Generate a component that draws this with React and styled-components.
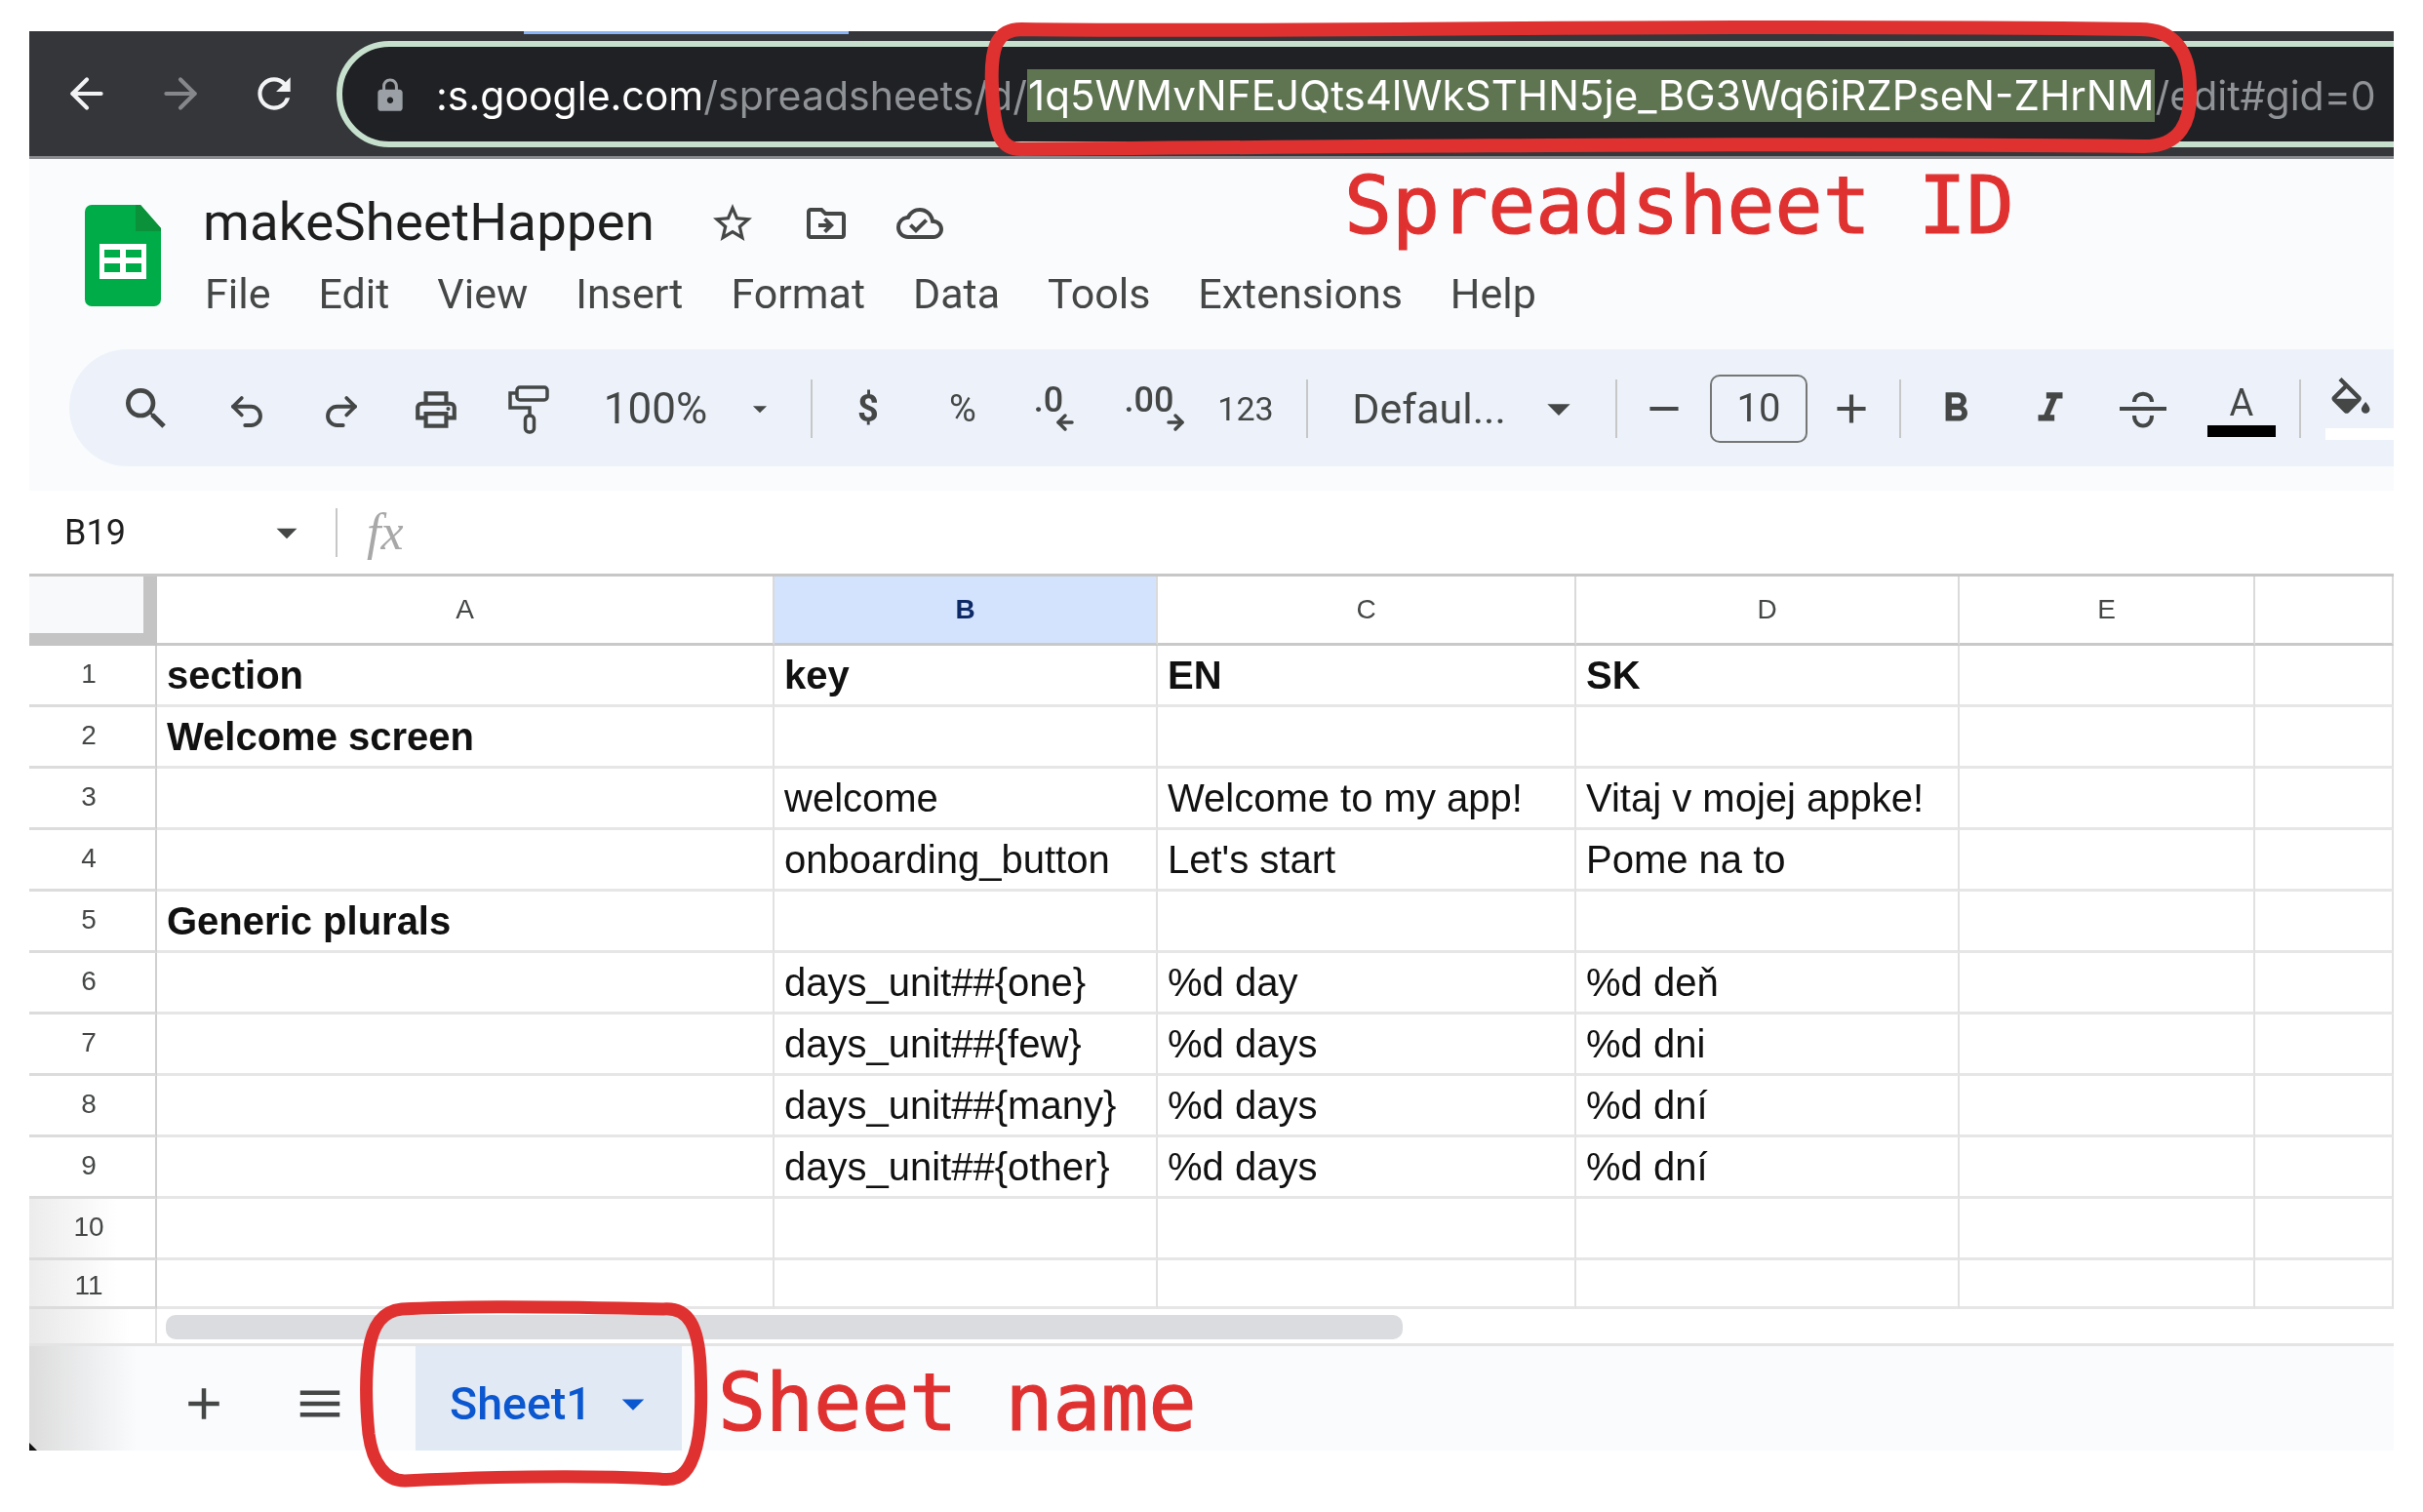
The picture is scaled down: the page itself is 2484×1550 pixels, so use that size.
import React from 'react';
import styled, { createGlobalStyle } from 'styled-components';
import { FiArrowLeft, FiArrowRight } from 'react-icons/fi';
import { Undo2, Redo2, ArrowLeft, ArrowRight } from 'lucide-react';
import {
  MdRefresh, MdLock, MdSearch, MdOutlineLocalPrintshop,
  MdArrowDropDown, MdOutlineStarBorder, MdOutlineDriveFileMove, MdOutlineCloudDone, MdAdd, MdRemove,
  MdFormatBold, MdFormatItalic, MdMenu,
} from 'react-icons/md';

const GlobalStyle = createGlobalStyle`
  html, body { margin: 0; padding: 0; background: #fff; }
  * { box-sizing: border-box; }
`;

const Page = styled.div`
  position: relative;
  width: 2484px;
  height: 1550px;
  padding: 32px 30px 0;
  background: #fff;
  overflow: hidden;
`;

const Screen = styled.div`
  height: 1455px;
  overflow: hidden;
  display: flex;
  flex-direction: column;
  filter: blur(0.6px);
  font-family: Roboto, "Liberation Sans", sans-serif;
`;

const BrowserBar = styled.div`
  position: relative;
  height: 131px;
  flex: none;
  display: flex;
  align-items: center;
  padding-left: 34px;
  background: #35363a;
  border-bottom: 3px solid #8a8c90;
  color: #fff;
`;

const LoadLine = styled.div`
  position: absolute;
  left: 507px;
  top: 0;
  width: 333px;
  height: 3px;
  background: #8ab4f8;
`;

const NavIcon = styled.span`
  width: 96px;
  flex: none;
  display: flex;
  align-items: center;
  color: ${(p) => (p.$dim ? '#85878a' : '#f1f3f4')};
  font-size: 50px;
`;

const AddressPill = styled.div`
  flex: 1;
  height: 109px;
  margin-left: -7px;
  margin-right: -80px;
  display: flex;
  align-items: center;
  padding: 3px 0 0 30px;
  border: 6px solid #c6e0cd;
  border-radius: 54px 0 0 54px;
  background: #202124;
  font-family: Inter, Roboto, sans-serif;
  font-size: 41px;
  white-space: nowrap;
`;

const LockIcon = styled.span`
  display: flex;
  width: 66px;
  flex: none;
  color: #9aa0a6;
  font-size: 38px;
`;

const UrlPart = styled.span`
  color: ${(p) => (p.$dim ? '#8f9296' : '#fff')};
`;

const UrlSelected = styled.span`
  display: inline-block;
  height: 54px;
  line-height: 54px;
  padding: 0 1px;
  background: #5f7552;
  color: #fff;
  font-size: 42.1px;
`;

const DocHeader = styled.div`
  flex: none;
  height: 340px;
  background: #f9fbfd;
  display: flex;
  flex-direction: column;
`;

const TitleArea = styled.div`
  height: 195px;
  display: flex;
  padding: 47px 0 0 57px;
`;

const LogoWrap = styled.div`
  width: 121px;
  flex: none;
`;

const TitleColumn = styled.div`
  display: flex;
  flex-direction: column;
  margin-top: -14px;
`;

const TitleRow = styled.div`
  display: flex;
  align-items: center;
  height: 62px;
`;

const DocTitle = styled.div`
  width: 519px;
  font-size: 54.5px;
  color: #1f1f1f;
  letter-spacing: 0.2px;
`;

const TitleIcon = styled.span`
  width: 96px;
  flex: none;
  display: flex;
  margin-top: 4px;
  color: #444746;
  font-size: 48px;
`;

const MenuBar = styled.div`
  display: flex;
  gap: 49px;
  margin-top: 18px;
  padding-left: 2px;
  font-size: 43px;
  color: #444746;
`;

const Toolbar = styled.div`
  height: 120px;
  margin-left: 41px;
  padding: 1px 0 0 31px;
  display: flex;
  align-items: center;
  overflow: hidden;
  background: #edf2fa;
  border-radius: 60px 0 0 60px;
  color: #444746;
`;

const Tool = styled.div`
  position: relative;
  width: ${(p) => p.$w}px;
  flex: none;
  height: 70px;
  display: flex;
  align-items: center;
  justify-content: center;
  padding-top: ${(p) => p.$drop || 0}px;
  font-size: ${(p) => p.$size || 50}px;
  font-weight: ${(p) => (p.$bold ? 700 : 400)};
`;

const ToolDivider = styled.div`
  width: ${(p) => p.$w}px;
  flex: none;
  display: flex;
  justify-content: center;

  &::before {
    content: '';
    width: 2px;
    height: 60px;
    background: #c7c7c7;
  }
`;

const SizeBox = styled.div`
  width: 100px;
  height: 70px;
  display: flex;
  align-items: center;
  justify-content: center;
  border: 2px solid #747775;
  border-radius: 10px;
  font-size: 40px;
`;

const DecimalMark = styled.span`
  display: flex;
  flex-direction: column;
  align-items: flex-end;
  font-size: 36px;
  line-height: 34px;
  font-weight: 500;
  transform: translateX(${(p) => p.$shift || 0}px);

  svg {
    margin: -6px -14px 0 0;
  }
`;

const ColorMark = styled.span`
  display: flex;
  flex-direction: column;
  align-items: ${(p) => (p.$start ? 'flex-start' : 'center')};
  font-size: 38px;
  line-height: 46px;
`;

const ColorSwatch = styled.span`
  width: 70px;
  height: 12px;
  background: ${(p) => p.$color};
`;

const FormulaBar = styled.div`
  flex: none;
  height: 85px;
  padding-left: 36px;
  display: flex;
  align-items: center;
  background: #fff;
`;

const NameBox = styled.div`
  width: 203px;
  font-size: 36px;
  color: #1f1f1f;
`;

const NameCaret = styled.span`
  width: 75px;
  display: flex;
  color: #444746;
  font-size: 50px;
`;

const FormulaDivider = styled.div`
  width: 2px;
  height: 50px;
  margin-right: 30px;
  background: #c7c7c7;
`;

const FxMark = styled.div`
  font-family: "Liberation Serif", serif;
  font-style: italic;
  font-size: 52px;
  color: #a8a8a8;
`;

const Sheet = styled.div`
  flex: none;
  display: grid;
  grid-template-columns: 131px 633px 393px 429px 393px 303px 142px;
  grid-template-rows: 71px repeat(10, 63px) 50px;
  border-top: 3px solid #c7c7c7;
  background: #fff;
  font-family: "Liberation Sans", Arial, sans-serif;
`;

const Corner = styled.div`
  background: #f8f9fa;
  border-right: 14px solid #c4c4c4;
  border-bottom: 13px solid #c4c4c4;
`;

const ColHead = styled.div`
  display: flex;
  align-items: center;
  justify-content: center;
  font-size: 28px;
  font-weight: ${(p) => (p.$active ? 700 : 400)};
  color: ${(p) => (p.$active ? '#0e2a66' : '#444746')};
  background: ${(p) => (p.$active ? '#d3e3fd' : '#fff')};
  border-right: 2px solid #dadada;
  border-bottom: 3px solid #c9c9c9;
`;

const RowHead = styled.div`
  display: flex;
  align-items: center;
  justify-content: center;
  padding: ${(p) => (p.$clipped ? '4px 7px 0 0' : '0 7px 3px 0')};
  font-size: 28px;
  color: #444746;
  border-right: 2px solid #d0d0d0;
  border-bottom: 3px solid #dcdcdc;
  background: ${(p) => (p.$shade ? 'linear-gradient(90deg, #ececec, #fff 70%)' : '#fff')};
`;

const Cell = styled.div`
  display: flex;
  align-items: center;
  padding-left: 10px;
  font-size: 40px;
  font-weight: ${(p) => (p.$bold ? 700 : 400)};
  color: #111;
  white-space: nowrap;
  border-right: 2px solid #e1e1e1;
  border-bottom: 3px solid #e6e6e6;
`;

const ScrollStrip = styled.div`
  flex: none;
  height: 38px;
  display: flex;
  background: #fff;
  border-bottom: 3px solid #e4e4e4;
`;

const ScrollGutter = styled.div`
  width: 131px;
  flex: none;
  border-right: 2px solid #e1e1e1;
  background: linear-gradient(90deg, #e8e8e8, #fff 80%);
`;

const ScrollThumb = styled.div`
  width: 1268px;
  height: 25px;
  margin: 6px 0 0 9px;
  border-radius: 10px;
  background: #dadce0;
`;

const Footer = styled.div`
  position: relative;
  flex: 1;
  display: flex;
  padding-left: 130px;
  background: linear-gradient(90deg, #dcdcdc, #f9fbfd 110px);
  color: #444746;

  &::after {
    content: '';
    position: absolute;
    left: 0;
    bottom: 0;
    border-left: 8px solid #111;
    border-top: 8px solid transparent;
  }
`;

const FooterIcon = styled.span`
  flex: none;
  width: ${(p) => p.$w}px;
  display: flex;
  align-items: center;
  justify-content: center;
  padding-top: 10px;
  font-size: 54px;
`;

const SheetTab = styled.div`
  width: 273px;
  margin-left: 28px;
  display: flex;
  align-items: center;
  padding: 10px 0 0 35px;
  gap: 15px;
  background: #e1e9f5;
  color: #0b57d0;
  font-size: 46.5px;
  font-weight: 500;
`;

const TabCaret = styled.span`
  display: flex;
  font-size: 54px;
`;

const InkLayer = styled.svg`
  position: absolute;
  left: 0;
  top: 0;
  pointer-events: none;
`;

const Note = styled.div`
  position: absolute;
  left: ${(p) => p.$x}px;
  top: ${(p) => p.$y}px;
  font-family: "DejaVu Sans Mono", monospace;
  font-size: 81.5px;
  line-height: 1;
  color: #e03131;
  white-space: pre;
  -webkit-text-stroke: 1.2px #e03131;
`;

const SheetsLogo = () => (
  <svg width="78" height="104" viewBox="0 0 78 104">
    <path d="M7 0h50l21 24v73a7 7 0 0 1-7 7H7a7 7 0 0 1-7-7V7a7 7 0 0 1 7-7z" fill="#00ac47" />
    <path d="M52 0h5l21 24v3H52z" fill="#0a9139" />
    <path d="M15 40h48v36H15z" fill="#fff" />
    <path d="M20 46h16v8H20zM42 46h16v8H42zM20 60h16v9H20zM42 60h16v9H42z" fill="#00ac47" />
  </svg>
);

const FillBucket = () => (
  <svg width="52" height="52" viewBox="0 0 24 24" fill="currentColor">
    <path d="M16.56 8.94L7.62 0 6.21 1.41l2.38 2.38-5.15 5.15c-.59.59-.59 1.54 0 2.12l5.5 5.5c.29.29.68.44 1.06.44s.77-.15 1.06-.44l5.5-5.5c.59-.58.59-1.53 0-2.12zM5.21 10L10 5.21 14.79 10H5.21zM19 11.5s-2 2.17-2 3.5c0 1.1.9 2 2 2s2-.9 2-2c0-1.33-2-3.5-2-3.5z" />
  </svg>
);

const Roller = () => (
  <svg width="42" height="50" viewBox="0 0 42 50" fill="none" stroke="currentColor" strokeWidth="3.5">
    <rect x="9" y="2" width="31" height="13" rx="3" />
    <path d="M9 8H2v15h20v8" />
    <rect x="17.5" y="31" width="9" height="17" rx="4" />
  </svg>
);

const StrikeMark = () => (
  <svg width="48" height="38" viewBox="0 0 48 38" fill="none" stroke="currentColor" strokeWidth="4">
    <path d="M0 18h48" />
    <path d="M15 11c0-11 18-11 18 0" />
    <path d="M15 25c0 14 18 14 18 0" />
  </svg>
);

const columns = ['A', 'B', 'C', 'D', 'E', ''];

const rows = [
  [{ t: 'section', b: true }, { t: 'key', b: true }, { t: 'EN', b: true }, { t: 'SK', b: true }],
  [{ t: 'Welcome screen', b: true }],
  [{}, { t: 'welcome' }, { t: 'Welcome to my app!' }, { t: 'Vitaj v mojej appke!' }],
  [{}, { t: 'onboarding_button' }, { t: "Let's start" }, { t: 'Pome na to' }],
  [{ t: 'Generic plurals', b: true }],
  [{}, { t: 'days_unit##{one}' }, { t: '%d day' }, { t: '%d deň' }],
  [{}, { t: 'days_unit##{few}' }, { t: '%d days' }, { t: '%d dni' }],
  [{}, { t: 'days_unit##{many}' }, { t: '%d days' }, { t: '%d dní' }],
  [{}, { t: 'days_unit##{other}' }, { t: '%d days' }, { t: '%d dní' }],
  [],
  [],
];

const menu = ['File', 'Edit', 'View', 'Insert', 'Format', 'Data', 'Tools', 'Extensions', 'Help'];

const App = () => (
  <Page>
    <GlobalStyle />
    <Screen>
      <BrowserBar>
        <LoadLine />
        <NavIcon><FiArrowLeft /></NavIcon>
        <NavIcon $dim><FiArrowRight /></NavIcon>
        <NavIcon><MdRefresh /></NavIcon>
        <AddressPill>
          <LockIcon><MdLock /></LockIcon>
          <UrlPart>:s.google.com</UrlPart>
          <UrlPart $dim>/spreadsheets/d/</UrlPart>
          <UrlSelected>1q5WMvNFEJQts4lWkSTHN5je_BG3Wq6iRZPseN-ZHrNM</UrlSelected>
          <UrlPart $dim>/edit#gid=0</UrlPart>
        </AddressPill>
      </BrowserBar>

      <DocHeader>
        <TitleArea>
          <LogoWrap><SheetsLogo /></LogoWrap>
          <TitleColumn>
            <TitleRow>
              <DocTitle>makeSheetHappen</DocTitle>
              <TitleIcon><MdOutlineStarBorder /></TitleIcon>
              <TitleIcon><MdOutlineDriveFileMove /></TitleIcon>
              <TitleIcon><MdOutlineCloudDone /></TitleIcon>
            </TitleRow>
            <MenuBar>
              {menu.map((item) => <span key={item}>{item}</span>)}
            </MenuBar>
          </TitleColumn>
        </TitleArea>
        <Toolbar>
          <Tool $w={96} $size={56}><MdSearch /></Tool>
          <Tool $w={110} $drop={6}><Undo2 size={42} strokeWidth={2.2} /></Tool>
          <Tool $w={84} $drop={6}><Redo2 size={42} strokeWidth={2.2} /></Tool>
          <Tool $w={110} $drop={2}><MdOutlineLocalPrintshop /></Tool>
          <Tool $w={80} $drop={2}><Roller /></Tool>
          <Tool $w={180} $size={44}>100%</Tool>
          <Tool $w={34} $size={56}><MdArrowDropDown /></Tool>
          <ToolDivider $w={72} />
          <Tool $w={44} $size={38} $bold>$</Tool>
          <Tool $w={150} $size={38}>%</Tool>
          <Tool $w={40}>
            <DecimalMark $shift={-7}>.0<ArrowLeft size={24} strokeWidth={3.5} /></DecimalMark>
          </Tool>
          <Tool $w={156}>
            <DecimalMark $shift={-2}>.00<ArrowRight size={24} strokeWidth={3.5} /></DecimalMark>
          </Tool>
          <Tool $w={38} $size={34}>123</Tool>
          <ToolDivider $w={88} />
          <Tool $w={162} $size={43}>Defaul...</Tool>
          <Tool $w={104} $size={56}><MdArrowDropDown /></Tool>
          <ToolDivider $w={14} />
          <Tool $w={84}><MdRemove /></Tool>
          <Tool $w={110}><SizeBox>10</SizeBox></Tool>
          <Tool $w={80}><MdAdd /></Tool>
          <ToolDivider $w={20} />
          <Tool $w={94}><MdFormatBold /></Tool>
          <Tool $w={100}><MdFormatItalic /></Tool>
          <Tool $w={90} $drop={2}><StrikeMark /></Tool>
          <Tool $w={112}>
            <ColorMark>A<ColorSwatch $color="#000" /></ColorMark>
          </Tool>
          <ToolDivider $w={8} />
          <Tool $w={114}>
            <ColorMark $start><FillBucket /><ColorSwatch $color="#fff" /></ColorMark>
          </Tool>
        </Toolbar>
      </DocHeader>

      <FormulaBar>
        <NameBox>B19</NameBox>
        <NameCaret><MdArrowDropDown /></NameCaret>
        <FormulaDivider />
        <FxMark>fx</FxMark>
      </FormulaBar>

      <Sheet>
        <Corner />
        {columns.map((c) => <ColHead key={c} $active={c === 'B'}>{c}</ColHead>)}
        {rows.map((row, r) => (
          <React.Fragment key={r}>
            <RowHead $shade={r > 8} $clipped={r === 10}>{r + 1}</RowHead>
            {columns.map((c, i) => (
              <Cell key={c} $bold={row[i]?.b}>{row[i]?.t}</Cell>
            ))}
          </React.Fragment>
        ))}
      </Sheet>

      <ScrollStrip>
        <ScrollGutter />
        <ScrollThumb />
      </ScrollStrip>

      <Footer>
        <FooterIcon $w={98}><MdAdd /></FooterIcon>
        <FooterIcon $w={140}><MdMenu /></FooterIcon>
        <SheetTab>
          Sheet1
          <TabCaret><MdArrowDropDown /></TabCaret>
        </SheetTab>
      </Footer>
    </Screen>

    <InkLayer width="2484" height="1550">
      <path
        d="M1047 30 C1300 34 1700 24 2194 30 C2228 30 2245 52 2245 90 C2247 125 2235 150 2198 150 C1800 146 1400 150 1047 153 C1027 153 1019 140 1017 90 C1015 50 1021 30 1047 30 Z"
        fill="none" stroke="#e03131" strokeWidth="14"
      />
      <path
        d="M412 1342 C480 1338 600 1340 680 1342 C706 1340 716 1360 718 1400 C720 1450 718 1480 708 1500 C700 1516 690 1518 675 1516 C600 1512 500 1514 415 1518 C395 1518 382 1500 378 1470 C374 1430 376 1400 378 1385 C382 1358 392 1344 412 1342 Z"
        fill="none" stroke="#e03131" strokeWidth="13"
      />
    </InkLayer>
    <Note $x={1378} $y={170}>Spreadsheet ID</Note>
    <Note $x={736} $y={1397}>Sheet name</Note>
  </Page>
);

export default App;
